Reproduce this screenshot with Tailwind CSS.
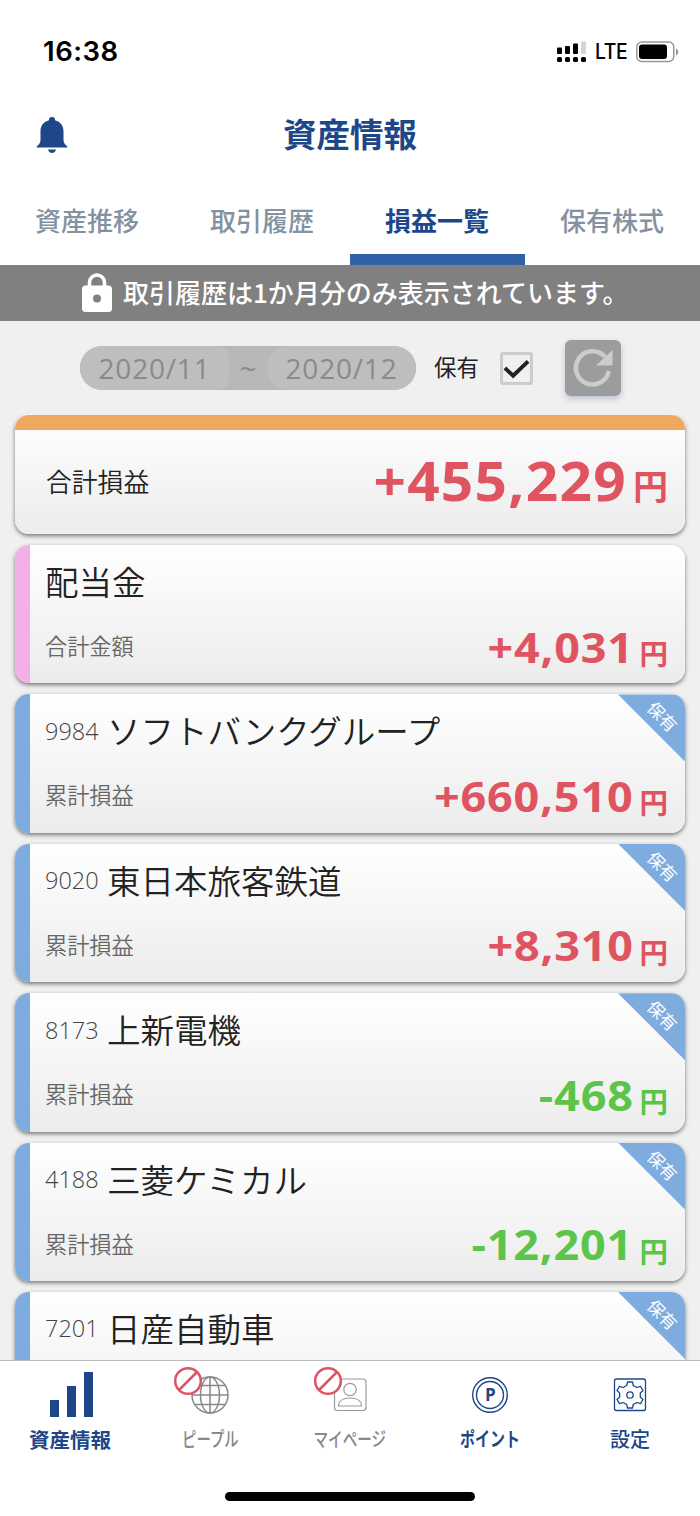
<!DOCTYPE html>
<html lang="ja">
<head>
  <meta charset="UTF-8" />
  <meta name="viewport" content="width=device-width, initial-scale=1.0" />
  <title>資産情報 - 損益一覧</title>
  <script src="https://cdn.jsdelivr.net/npm/@tailwindcss/browser@4"></script>
</head>
<body class="bg-white font-['Open_Sans','Noto_Sans_CJK_JP',sans-serif] text-[#222]">

<div class="w-[700px] h-[1516px] flex flex-col overflow-hidden bg-[#f0f0f0]">

  <!-- ステータスバー -->
  <div class="h-[100px] shrink-0 bg-white flex items-center justify-between pl-[43px] pr-[21px] pt-[3px]">
    <span class="font-['Inter',sans-serif] font-semibold text-[27.500px] tracking-[0.500px] text-black">16:38</span>
    <div class="flex items-center text-black">
      <svg class="w-[30px] h-[22px]" viewBox="0 0 30 22">
        <rect x="0" y="6.500" width="5" height="6.500" rx="1" />
        <rect x="8" y="5" width="5" height="8" rx="1" />
        <rect x="16" y="2.500" width="5" height="10.500" rx="1" />
        <rect x="24" y="0.500" width="5" height="12.500" rx="1" fill="#d4d4d4" />
        <rect x="0" y="16" width="5" height="5" rx="1.500" />
        <rect x="8" y="16" width="5" height="5" rx="1.500" />
        <rect x="16" y="16" width="5" height="5" rx="1.500" />
        <rect x="24" y="16" width="5" height="5" rx="1.500" />
      </svg>
      <span class="w-[49px] shrink-0 pl-[8px] font-['Inter',sans-serif] font-medium text-[22px] tracking-[-0.500px]"><span class="inline-block origin-left scale-x-[0.88]">LTE</span></span>
      <svg class="w-[43px] h-[22px]" viewBox="0 0 43 22">
        <rect x="0.800" y="1" width="37" height="19.500" rx="5" fill="none" stroke="#999" stroke-width="1.500" />
        <rect x="3" y="3.500" width="28" height="14.500" rx="3" />
        <path d="M40 7.500v7c3-1 3-6 0-7z" fill="#999" />
      </svg>
    </div>
  </div>

  <!-- ヘッダー -->
  <header class="h-[80px] shrink-0 bg-white grid grid-cols-3 items-center px-[36px] pb-[11px]">
    <svg class="w-[32px] h-[38px] text-[#1d4788]" viewBox="0 0 32 38" fill="currentColor">
      <path d="M16 1a3 3 0 0 1 3 3.200c5.500 1.400 8.500 5.500 8.500 11V24c0 3 1.500 4.500 3.700 6.200V31.500H.8V30.200C3 28.500 4.500 27 4.500 24v-8.800c0-5.500 3-9.600 8.500-11A3 3 0 0 1 16 1z" />
      <path d="M12 33.500h8c-.5 2.300-2 3.500-4 3.500s-3.500-1.200-4-3.500z" />
    </svg>
    <h1 class="pb-[2px] text-center font-bold text-[33.500px] leading-[40px] text-[#1d4788] whitespace-nowrap">資産情報</h1>
  </header>

  <!-- タブ -->
  <nav class="h-[85px] shrink-0 bg-white grid grid-cols-4 text-center text-[26px] leading-[74px] font-medium text-[#8391a1]">
    <a class="pt-[4px] pr-[1px]">資産推移</a>
    <a class="pt-[4px] pr-[1px]">取引履歴</a>
    <a class="pt-[4px] pr-[1px] h-[85px] border-b-[11px] border-[#2f62a6] text-[#1d4788] font-bold">損益一覧</a>
    <a class="pt-[4px] pr-[1px]">保有株式</a>
  </nav>

  <!-- お知らせ -->
  <div class="h-[56px] shrink-0 bg-[#808080] flex items-center pl-[82px] text-white">
    <svg class="w-[30px] h-[40px]" viewBox="0 0 30 40">
      <path d="M7.500 15V9.500a7.500 7.500 0 0 1 15 0V15" fill="none" stroke="#fff" stroke-width="3.600" />
      <rect x="0" y="12.500" width="30" height="26.500" rx="3.500" fill="#fff" />
      <circle cx="15" cy="25.500" r="4" fill="#808080" />
    </svg>
    <p class="pl-[11px] pb-[3px] font-['Noto_Sans_CJK_JP',sans-serif] text-[26px] font-medium whitespace-nowrap">取引履歴は1か月分のみ表示されています。</p>
  </div>

  <!-- 絞り込み -->
  <div class="h-[94px] shrink-0 flex items-center pl-[80px]">
    <div class="w-[336px] h-[44px] rounded-full bg-[#b8b8b8] flex items-center justify-between overflow-hidden text-[28px] text-[#8a8a8a]">
      <span class="w-[149px] h-full rounded-r-xl bg-[#bebebe] text-center leading-[44px] tracking-[0.800px]">2020/11</span>
      <span class="text-[30px]">~</span>
      <span class="w-[149px] h-full rounded-l-[22px] bg-[#bebebe] text-center leading-[44px] tracking-[0.800px]">2020/12</span>
    </div>
    <span class="ml-[18px] w-[66px] text-[22.500px] leading-[44px]">保有</span>
    <span class="w-[33px] h-[33px] border-[3px] border-[#ccc] rounded-[3px]">
      <svg class="w-[27px] h-[27px]" viewBox="0 0 28 28" fill="none" stroke="#222" stroke-width="4">
        <path d="M2 13.500l8.500 8L26 6.500" />
      </svg>
    </span>
    <span class="ml-[32px] w-[56px] h-[56px] rounded-[6px] bg-[#9b9d9d] shadow-[0_3px_6px_rgba(80,90,140,0.3)]">
      <svg class="w-[56px] h-[56px]" viewBox="0 0 56 56">
        <path d="M40 17A16.600 16.600 0 1 0 43.800 31" fill="none" stroke="#ccc" stroke-width="4.500" />
        <path d="M47.500 10v15.500H31z" fill="#ccc" />
      </svg>
    </span>
  </div>

  <!-- 損益カード -->
  <main class="flex-1 min-h-0 overflow-hidden px-[15px] flex flex-col gap-[11px]">
    <section class="h-[119px] shrink-0 rounded-[14px] overflow-clip shadow-[0_2px_4px_rgba(0,0,0,0.5)] bg-linear-to-b from-white to-[#ececec]">
      <div class="h-[14.500px] bg-[#f0a860]"></div>
      <div class="h-[104px] flex items-center justify-between pl-[31px] pr-[17px]">
        <span class="text-[25.800px] font-[350] leading-[40px]">合計損益</span>
        <span class="flex items-baseline font-bold text-[#de5460]">
          <span class="relative top-[3px] origin-right scale-x-[1.07] text-[53px] leading-[60px] tracking-[1.200px]">+455,229</span>
          <span class="ml-[6px] relative top-[2px] text-[35px] leading-[60px]">円</span>
        </span>
      </div>
    </section>
    <div id="cards" class="flex flex-col gap-[11px]"></div>
  </main>

  <!-- タブバー -->
  <footer class="h-[156px] shrink-0 bg-white border-t border-[#bbb] flex flex-col items-center justify-between pb-[15px]">
    <div class="w-full grid grid-cols-5 text-center text-[20px] leading-[32px] font-medium text-[#888]">
      <div class="flex flex-col items-center pt-[7px] text-[#1d4788]">
        <svg class="w-[60px] h-[56px]" viewBox="0 0 60 56" fill="currentColor">
          <path d="M10 32h9v17h-9zM27 18h9v31h-9zM44 4h9v45h-9z" />
        </svg>
        <span class="font-bold text-[20.500px]">資産情報</span>
      </div>
      <div class="flex flex-col items-center pt-[7px]">
        <svg class="w-[76px] h-[56px] overflow-visible" viewBox="0 0 76 56" fill="none" stroke="#888" stroke-width="1.500">
          <circle cx="38" cy="27" r="18" />
          <ellipse cx="38" cy="27" rx="9.500" ry="18" />
          <path d="M38 9v36M20 27h36M23 17.500h30M23 36.500h30" />
          <circle cx="16" cy="13" r="12.800" fill="#fff" stroke="#de5460" stroke-width="2.500" />
          <path d="M7 22L25 4" stroke="#de5460" stroke-width="2.500" />
        </svg>
        <span class="scale-x-[0.72]">ピープル</span>
      </div>
      <div class="flex flex-col items-center pt-[7px]">
        <svg class="w-[76px] h-[56px] overflow-visible" viewBox="0 0 76 56" fill="none" stroke="#999" stroke-width="1.200">
          <rect x="22.500" y="11" width="31.500" height="31.500" rx="3" />
          <circle cx="38" cy="21.500" r="6.200" />
          <path d="M26.500 38c0-5 4.500-8 11.500-8s11.500 3 11.500 8z" />
          <circle cx="16" cy="13" r="12.800" fill="#fff" stroke="#de5460" stroke-width="2.500" />
          <path d="M7 22L25 4" stroke="#de5460" stroke-width="2.500" />
        </svg>
        <span class="scale-x-[0.73]">マイページ</span>
      </div>
      <div class="flex flex-col items-center pt-[7px] text-[#1d4788]">
        <svg class="w-[60px] h-[56px]" viewBox="0 0 60 56" fill="none" stroke="currentColor" stroke-width="1.400">
          <circle cx="30" cy="27" r="17.300" />
          <circle cx="30" cy="27" r="13.500" />
          <text x="30.300" y="33" text-anchor="middle" font-size="17" font-weight="700" fill="currentColor" stroke="none">P</text>
        </svg>
        <span class="scale-x-[0.75] font-bold">ポイント</span>
      </div>
      <div class="flex flex-col items-center pt-[7px] text-[#1d4788]">
        <svg class="w-[60px] h-[56px]" viewBox="0 0 60 56" fill="none" stroke="currentColor" stroke-width="1.300" stroke-linejoin="round">
          <rect x="14.500" y="11" width="31" height="31.500" rx="2" />
          <circle cx="30" cy="27" r="3.200" />
          <path d="M27.500 14h5l.8 3.500 3.500 2 3.700-1.200 2.500 4.200-2.700 2.500v4l2.700 2.500-2.500 4.200-3.700-1.200-3.500 2-.8 3.500h-5l-.8-3.500-3.500-2-3.700 1.200-2.500-4.200 2.700-2.500v-4l-2.700-2.500 2.500-4.200 3.700 1.200 3.500-2z" />
        </svg>
        <span>設定</span>
      </div>
    </div>
    <div class="w-[250px] h-[9px] rounded-full bg-black"></div>
  </footer>
</div>

<script>
  const RED = "text-[#de5460]";
  const GREEN = "text-[#5bc549]";

  const cards = [
    ["", "配当金", "合計金額", "+4,031", RED],
    ["9984", "ソフトバンクグループ", "累計損益", "+660,510", RED],
    ["9020", "東日本旅客鉄道", "累計損益", "+8,310", RED],
    ["8173", "上新電機", "累計損益", "-468", GREEN],
    ["4188", "三菱ケミカル", "累計損益", "-12,201", GREEN],
    ["7201", "日産自動車", "", "", RED]
  ];

  const container = document.getElementById("cards");
  cards.forEach(([code, name, label, amount, color]) => {
    const bar = code ? "border-[#7facdf]" : "border-[#f2b0e6]";
    const codeHtml = code ? `<span class="w-[62px] text-[23.500px] font-light text-[#444]">${code}</span>` : "";
    // 保有中の銘柄だけ右上にリボンを付ける
    const ribbon = code ? `
      <div class="absolute top-0 right-0 w-[67px] h-[67px] bg-[#7facdf] [clip-path:polygon(0_0,100%_0,100%_100%)]">
        <span class="absolute left-[27px] top-[13px] w-[34px] text-[17px] leading-[20px] text-white rotate-45">保有</span>
      </div>` : "";
    const amountHtml = amount ? `
      <span class="flex items-baseline font-bold ${color}">
        <span class="relative top-[2px] origin-right scale-x-[1.070] text-[42px] leading-[50px] tracking-[0.800px]">${amount}</span>
        <span class="ml-[6px] relative top-[4.500px] text-[28.500px] leading-[50px]">円</span>
      </span>` : "";
    const section = document.createElement("section");
    section.className = `relative h-[138.400px] shrink-0 rounded-[14px] overflow-clip shadow-[0_2px_4px_rgba(0,0,0,0.5)] border-l-[15px] ${bar} bg-linear-to-b from-white to-[#ececec] pl-[15px] pr-[17px]`;
    section.innerHTML = `
      <div class="h-[74px] flex items-center">
        ${codeHtml}
        <span class="text-[33.500px] font-[350] leading-[50px]">${name}</span>
      </div>
      <div class="h-[56px] flex items-center justify-between">
        <span class="text-[22.200px] text-[#666] font-[350] leading-[30px]">${label}</span>
        ${amountHtml}
      </div>
      ${ribbon}
    `;
    container.appendChild(section);
  });
</script>

</body>
</html>
